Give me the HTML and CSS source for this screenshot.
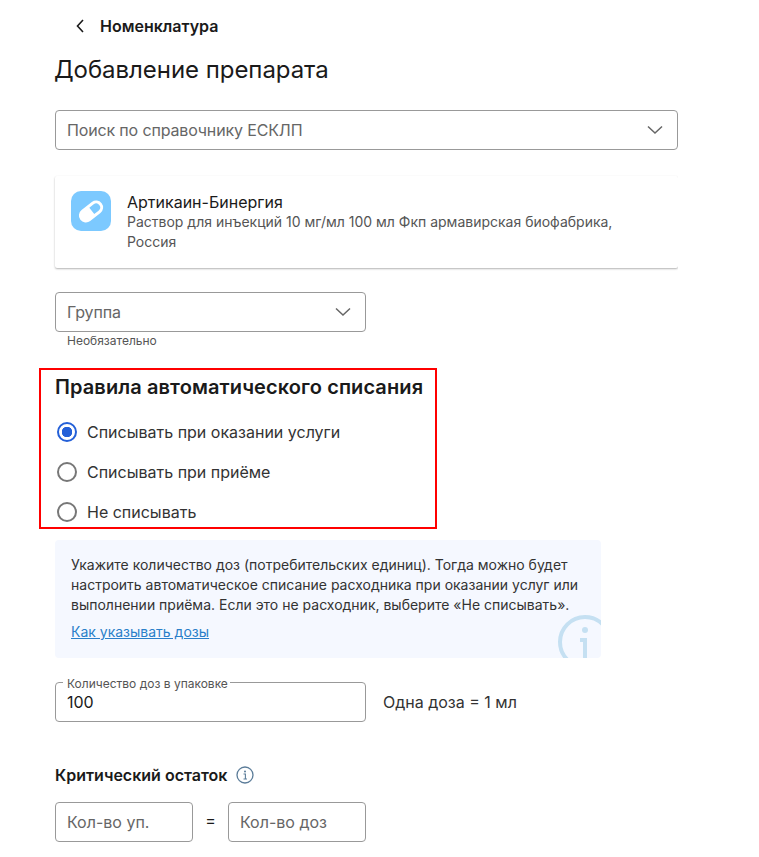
FILE: index.html
```html
<!DOCTYPE html>
<html lang="en">
<head>
  <meta charset="UTF-8">
  <meta name="viewport" content="width=device-width, initial-scale=1.0">
  <title>Добавление препарата</title>
  <link rel="stylesheet" href="styles.css">
</head>
<body>
  <main class="page">
    <div class="back">
      <svg class="back-icon" width="10" height="16" viewBox="0 0 10 16"><path d="M8 2 L2.5 8 L8 14" fill="none" stroke="#1a1a1a" stroke-width="1.6"/></svg>
      <span>Номенклатура</span>
    </div>
    <h1>Добавление препарата</h1>

    <div class="select select-wide">
      <span>Поиск по справочнику ЕСКЛП</span>
      <svg width="16" height="10" viewBox="0 0 16 10"><path d="M1 1.5 L8 8 L15 1.5" fill="none" stroke="#666" stroke-width="1.5"/></svg>
    </div>

    <div class="drug-card">
      <div class="drug-icon">
        <svg width="40" height="40" viewBox="0 0 40 40">
          <g transform="rotate(-38 20 20.5)">
            <rect x="6.5" y="13.5" width="27" height="14" rx="7" fill="#fff"/>
            <path d="M21 16.5 H26.5 a4 4 0 0 1 0 8 H21 Z" fill="#7cc9ff"/>
          </g>
        </svg>
      </div>
      <div class="drug-text">
        <div class="drug-name">Артикаин-Бинергия</div>
        <div class="drug-desc">Раствор для инъекций 10 мг/мл 100 мл Фкп армавирская биофабрика, Россия</div>
      </div>
    </div>

    <div class="select select-half">
      <span>Группа</span>
      <svg width="16" height="10" viewBox="0 0 16 10"><path d="M1 1.5 L8 8 L15 1.5" fill="none" stroke="#666" stroke-width="1.5"/></svg>
    </div>
    <div class="hint">Необязательно</div>

    <section class="rules">
      <h2>Правила автоматического списания</h2>
      <div class="radio-row"><span class="radio radio-on"></span>Списывать при оказании услуги</div>
      <div class="radio-row"><span class="radio"></span>Списывать при приёме</div>
      <div class="radio-row"><span class="radio"></span>Не списывать</div>
    </section>

    <div class="info">
      <p>Укажите количество доз (потребительских единиц). Тогда можно будет настроить автоматическое списание расходника при оказании услуг или выполнении приёма. Если это не расходник, выберите «Не списывать».</p>
      <a href="#">Как указывать дозы</a>
      <svg class="info-mark" width="46" height="43" viewBox="0 0 46 43">
        <circle cx="30" cy="27" r="25" fill="none" stroke="#c5e0f2" stroke-width="4"/>
        <circle cx="30" cy="15" r="3" fill="#c5e0f2"/>
        <path d="M25 25 H30 V43" fill="none" stroke="#c5e0f2" stroke-width="4"/>
      </svg>
    </div>

    <div class="dose-row">
      <div class="field field-half">
        <span class="field-label">Количество доз в упаковке</span>
        <span class="field-value">100</span>
      </div>
      <span class="dose-note">Одна доза = 1 мл</span>
    </div>

    <div class="stock-title">
      <h3>Критический остаток</h3>
      <svg width="18" height="18" viewBox="0 0 18 18">
        <circle cx="9" cy="9" r="8" fill="none" stroke="#5b7c99" stroke-width="1.3"/>
        <circle cx="9" cy="5.4" r="1" fill="#5b7c99"/>
        <path d="M7.5 8 H9.4 V13 M7.5 13 H11" fill="none" stroke="#5b7c99" stroke-width="1.1"/>
      </svg>
    </div>

    <div class="stock-row">
      <div class="field field-small"><span class="placeholder">Кол-во уп.</span></div>
      <span class="equals">=</span>
      <div class="field field-small"><span class="placeholder">Кол-во доз</span></div>
    </div>
  </main>
</body>
</html>
```

FILE: styles.css
```css
* {
  box-sizing: border-box;
}
body {
  margin: 0;
  background-color: #fff;
  color: #1a1a1a;
  font-family: Inter, "Noto Sans", sans-serif;
  font-size: 16px;
}
.page {
  width: 678px;
  height: 857px;
  padding-left: 55px;
  overflow: hidden;
}
.back {
  display: flex;
  align-items: center;
  height: 20px;
  margin-top: 16px;
  padding-left: 20px;
  font-size: 16px;
  font-weight: 600;
}
.back-icon {
  margin-right: 15px;
}
h1 {
  margin: 14px 0 0 -1px;
  font-size: 24px;
  line-height: 40px;
  font-weight: 400;
  letter-spacing: -0.05px;
}
.select,
.field {
  display: flex;
  align-items: center;
  height: 40px;
  padding: 0 11px;
  border: 1px solid #999;
  border-radius: 4px;
  background-color: #fff;
}
.select {
  justify-content: space-between;
  padding-right: 14px;
  color: #666;
  letter-spacing: -0.15px;
}
.select-wide {
  width: 623px;
  margin-top: 20px;
}
.select-half {
  width: 311px;
  margin-top: 24px;
}
.drug-card {
  display: flex;
  gap: 16px;
  width: 623px;
  height: 92px;
  margin-top: 26px;
  padding: 15px 16px;
  border-radius: 2px;
  box-shadow: 0 1px 2px rgba(0, 0, 0, 0.3);
}
.drug-icon {
  flex: none;
  width: 40px;
  height: 40px;
  border-radius: 10px;
  background-color: #7cc9ff;
}
.drug-name {
  font-size: 16px;
  line-height: 20px;
  margin-top: 1px;
}
.drug-desc {
  font-size: 14px;
  line-height: 20px;
  color: #555;
}
.hint {
  margin-top: 2px;
  padding-left: 12px;
  font-size: 12px;
  line-height: 14px;
  color: #555;
}
.rules {
  width: 398px;
  height: 161px;
  margin: 20px 0 0 -16px;
  padding: 5px 14px 0;
  border: 2px solid #f00;
}
h2 {
  margin: 0 0 13px;
  font-size: 20px;
  line-height: 24px;
  font-weight: 600;
  letter-spacing: 0.1px;
  white-space: nowrap;
}
.radio-row {
  display: flex;
  align-items: center;
  gap: 10px;
  height: 40px;
  font-size: 16px;
  color: #333;
}
.radio {
  flex: none;
  width: 20px;
  height: 20px;
  margin-left: 2px;
  border: 2px solid #777;
  border-radius: 50%;
  background-color: #fff;
}
.radio-on {
  border-color: #2460d8;
  background: radial-gradient(circle, #2460d8 0 5px, #fff 5.5px);
}
.info {
  position: relative;
  width: 546px;
  height: 118px;
  margin-top: 11px;
  padding: 15px 16px;
  border-radius: 4px;
  background-color: #f5f8ff;
  font-size: 14px;
  line-height: 20px;
  color: #333;
  overflow: hidden;
}
.info p {
  margin: 0 0 7px;
}
.info a {
  color: #2a7fc9;
}
.info-mark {
  position: absolute;
  right: 0;
  bottom: 0;
}
.dose-row {
  display: flex;
  align-items: center;
  gap: 17px;
  margin-top: 24px;
}
.field-half {
  position: relative;
  width: 311px;
}
.field-label {
  position: absolute;
  left: 7px;
  top: -6px;
  padding: 0 2px 0 4px;
  background-color: #fff;
  font-size: 12px;
  line-height: 14px;
  color: #555;
}
.dose-note {
  color: #333;
}
.stock-title {
  display: flex;
  align-items: center;
  gap: 9px;
  margin-top: 43px;
}
h3 {
  margin: 0;
  font-size: 16px;
  line-height: 20px;
  font-weight: 600;
}
.stock-row {
  display: flex;
  align-items: center;
  margin-top: 17px;
}
.field-small {
  width: 138px;
}
.placeholder {
  color: #666;
}
.equals {
  width: 35px;
  padding-bottom: 4px;
  text-align: center;
  font-size: 16px;
}
```
